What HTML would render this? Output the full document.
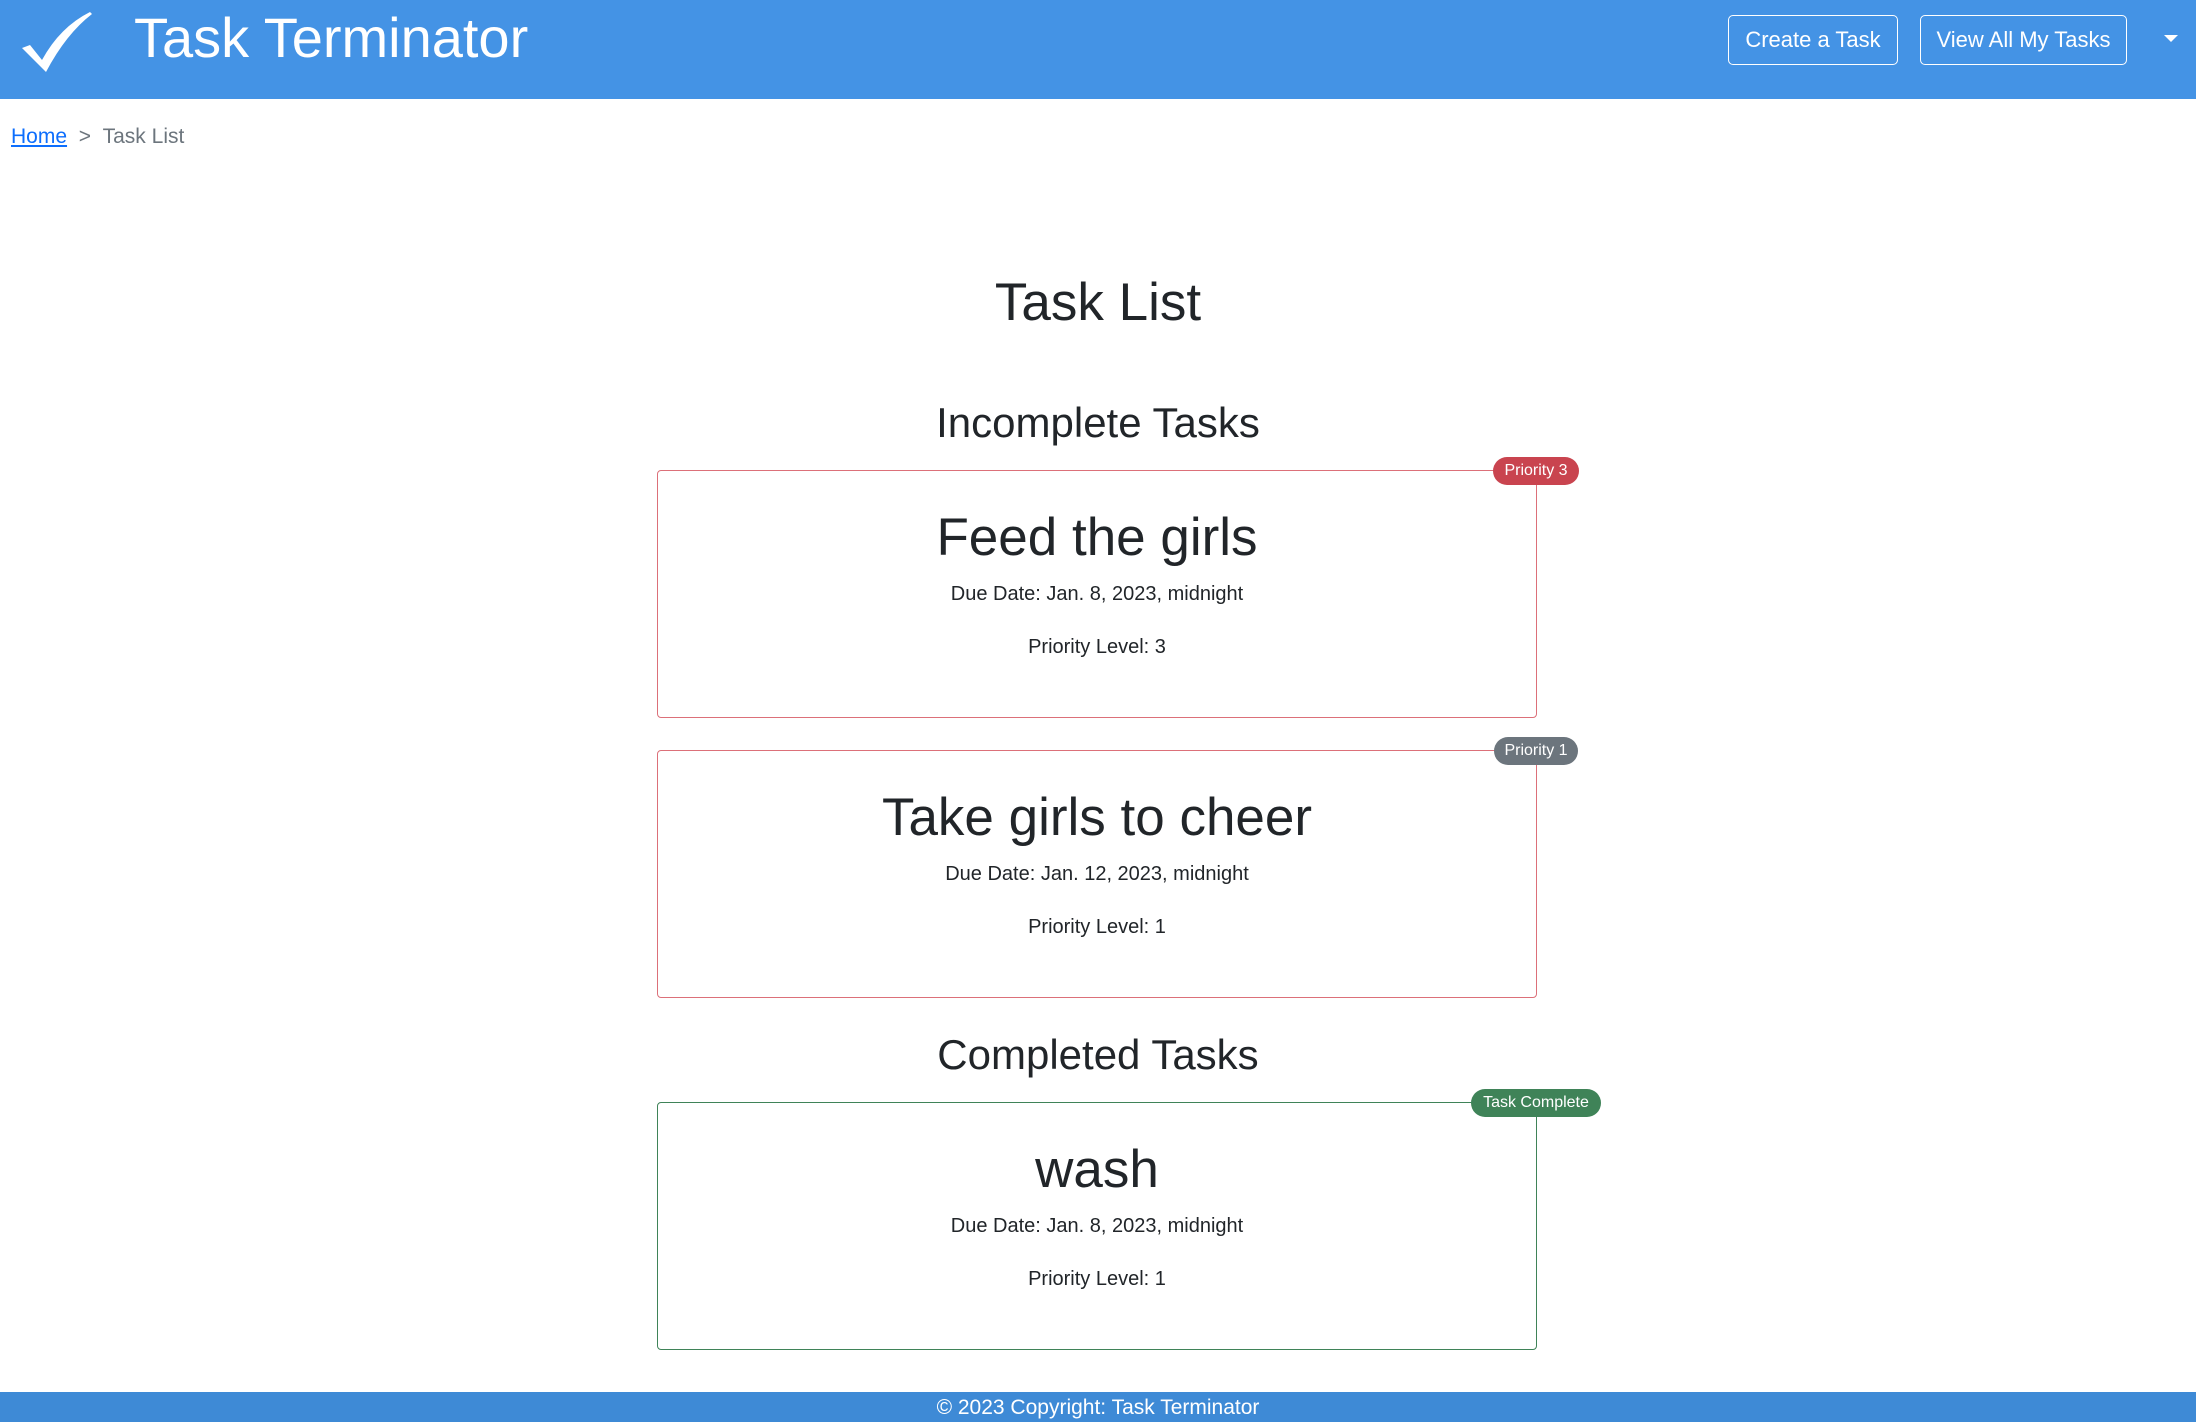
<!DOCTYPE html>
<html><head><meta charset="utf-8"><style>
*{margin:0;padding:0;box-sizing:border-box}
body{width:2196px;height:1422px;position:relative;background:#fff;font-family:"Liberation Sans",sans-serif;color:#212529;overflow:hidden}
.hdr{position:absolute;left:0;top:0;width:2196px;height:99px;background:#4493e5}
.logo{position:absolute;left:134px;top:5px;font-size:56px;color:#fff}
.btn{position:absolute;top:15px;height:50px;border:1.5px solid #fff;border-radius:5px;color:#fff;font-size:22px;line-height:47px;text-align:center}
.crumb{position:absolute;left:11px;top:125px;font-size:21px;color:#6c757d}
.crumb a{color:#0d6efd;text-decoration:underline}
.c{position:absolute;left:0;width:2196px;text-align:center}
.card{position:absolute;left:657px;width:880px;height:248px;border:1.5px solid #dc7079;border-radius:4px}
.card.g{border-color:#3f8358}
.card h2{font-weight:normal;font-size:53px;text-align:center;margin-top:37px;line-height:60px}
.card p{text-align:center;font-size:20px;margin-top:15px;line-height:22px}
.card p+p{margin-top:31px}
.badge{position:absolute;height:28px;border-radius:14px;color:#fff;font-size:16px;line-height:28px;text-align:center}
.foot{position:absolute;left:0;top:1392px;width:2196px;height:30px;background:#3e8ad6;color:#fff;font-size:21px;text-align:center;line-height:31px}
</style></head><body>
<div class="hdr">
<svg style="position:absolute;left:22px;top:12px" width="74" height="60" viewBox="0 0 74 60"><path d="M0 36 L8 33 L20 48 Q38 15 68 0 L70 2 Q44 22 24 60 Z" fill="#fff"/></svg>
<div class="logo">Task Terminator</div>
<div class="btn" style="left:1728px;width:170px">Create a Task</div>
<div class="btn" style="left:1920px;width:207px">View All My Tasks</div>
<svg style="position:absolute;left:2164px;top:35px" width="14" height="8"><path d="M0 0H14L7 7Z" fill="#fff"/></svg>
</div>
<div class="crumb"><a>Home</a>&nbsp; &gt; &nbsp;Task List</div>
<div class="c" style="top:272px;font-size:53px">Task List</div>
<div class="c" style="top:399px;font-size:42px">Incomplete Tasks</div>
<div class="card" style="top:470px"><h2>Feed the girls</h2><p>Due Date: Jan. 8, 2023, midnight</p><p>Priority Level: 3</p></div>
<div class="badge" style="left:1493px;top:457px;width:86px;background:#c9444f">Priority 3</div>
<div class="card" style="top:750px"><h2>Take girls to cheer</h2><p>Due Date: Jan. 12, 2023, midnight</p><p>Priority Level: 1</p></div>
<div class="badge" style="left:1494px;top:737px;width:84px;background:#6c757d">Priority 1</div>
<div class="c" style="top:1031px;font-size:42px">Completed Tasks</div>
<div class="card g" style="top:1102px"><h2>wash</h2><p>Due Date: Jan. 8, 2023, midnight</p><p>Priority Level: 1</p></div>
<div class="badge" style="left:1471px;top:1089px;width:130px;background:#3f8358">Task Complete</div>
<div class="foot">© 2023 Copyright: Task Terminator</div>
</body></html>
